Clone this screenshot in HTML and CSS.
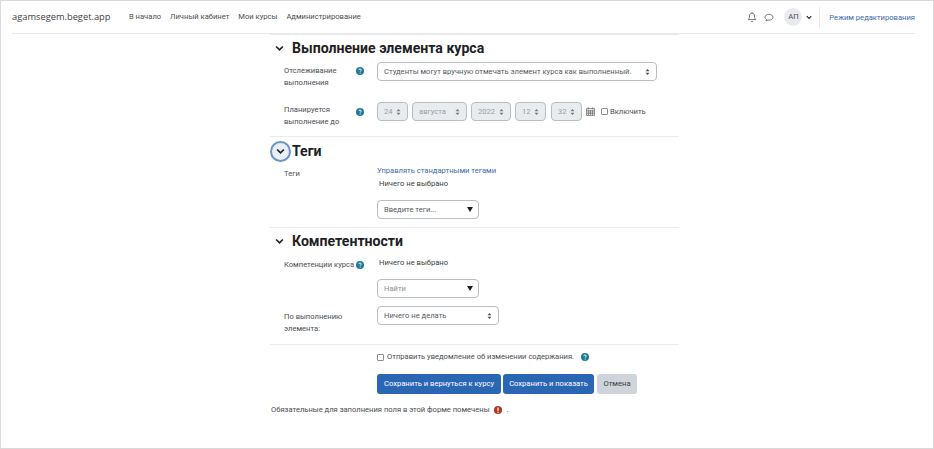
FILE: index.html
```html
<!DOCTYPE html>
<html lang="ru">
<head>
<meta charset="utf-8">
<title>agamsegem.beget.app</title>
<link rel="stylesheet" href="styles.css">
</head>
<body>
<svg class="defs" width="0" height="0" aria-hidden="true">
  <symbol id="updown" viewBox="0 0 6 8"><path d="M3 0 5.600 3H.4zM3 8 .4 5h5.200z"/></symbol>
  <symbol id="help" viewBox="0 0 8 8"><circle cx="4" cy="4" r="4" fill="#1f7a98"/><path d="M2.700 3.100C2.800 2.300 3.300 2 4 2c.8 0 1.300.4 1.300 1 0 .9-1.100.9-1.100 1.700" fill="none" stroke="#fff" stroke-width=".9"/><circle cx="4.200" cy="6" r=".55" fill="#fff"/></symbol>
  <symbol id="chev" viewBox="0 0 8 6"><path d="M1 1.200 4 4.200 7 1.200" fill="none" stroke="#1d2125" stroke-width="1.500"/></symbol>
</svg>
<div class="frame">
  <header class="nav">
    <span class="brand">agamsegem.beget.app</span>
    <nav class="menu"><a>В начало</a><a>Личный кабинет</a><a>Мои курсы</a><a>Администрирование</a></nav>
    <div class="tools">
      <svg class="tool" viewBox="0 0 10 11"><path d="M5 1.200C3.300 1.200 2.600 2.500 2.600 4c0 2.300-.9 3-1.400 3.600h7.600C8.300 7 7.400 6.300 7.400 4 7.400 2.500 6.700 1.200 5 1.200zM4 9c.2.9 1.800.9 2 0M5 .3v.9" fill="none" stroke="#555" stroke-width=".8"/></svg>
      <svg class="tool chat" viewBox="0 0 10 10"><path d="M5 1.800C2.700 1.800 1 3 1 4.700c0 1 .6 1.800 1.500 2.300L2 8.500 3.900 7.500C4.300 7.600 4.600 7.600 5 7.600c2.300 0 4-1.200 4-2.900S7.300 1.800 5 1.800z" fill="none" stroke="#555" stroke-width=".8"/></svg>
      <span class="avatar">АП</span>
      <svg class="caret"><use href="#chev"/></svg>
      <a class="edit">Режим редактирования</a>
    </div>
  </header>
  <main class="form">
    <section class="section first">
      <h3 class="heading"><svg class="chev"><use href="#chev"/></svg>Выполнение элемента курса</h3>
      <div class="row r-track">
        <div class="label"><span>Отслеживание выполнения</span><svg class="help"><use href="#help"/></svg></div>
        <div class="control"><div class="select wide">Студенты могут вручную отмечать элемент курса как выполненный.<svg class="ud"><use href="#updown"/></svg></div></div>
      </div>
      <div class="row r-date">
        <div class="label"><span>Планируется выполнение до</span><svg class="help"><use href="#help"/></svg></div>
        <div class="control dates">
          <div class="select off d1">24<svg class="ud"><use href="#updown"/></svg></div>
          <div class="select off d2">августа<svg class="ud"><use href="#updown"/></svg></div>
          <div class="select off d3">2022<svg class="ud"><use href="#updown"/></svg></div>
          <div class="select off d1">12<svg class="ud"><use href="#updown"/></svg></div>
          <div class="select off d1 d5">32<svg class="ud"><use href="#updown"/></svg></div>
          <svg class="cal" viewBox="0 0 9 9"><path d="M.5 1.500h8v7h-8zM.5 3.300h8M2.300.3v2M6.700.3v2M.5 5h8M.5 6.700h8M2.500 3.300v5M4.500 3.300v5M6.500 3.300v5" fill="none" stroke="#666" stroke-width=".7"/></svg>
          <label class="check"><i class="box"></i>Включить</label>
        </div>
      </div>
    </section>
    <section class="section tags">
      <h3 class="heading focus"><span class="ring"><svg class="chev"><use href="#chev"/></svg></span>Теги</h3>
      <div class="row r-tags">
        <div class="label"><span>Теги</span></div>
        <div class="control stack">
          <a class="link">Управлять стандартными тегами</a>
          <span class="none">Ничего не выбрано</span>
          <div class="select auto">Введите теги...<i class="tri"></i></div>
        </div>
      </div>
    </section>
    <section class="section comp">
      <h3 class="heading"><svg class="chev"><use href="#chev"/></svg>Компетентности</h3>
      <div class="row r-comp">
        <div class="label tight"><span>Компетенции курса</span><svg class="help"><use href="#help"/></svg></div>
        <div class="control stack">
          <span class="none">Ничего не выбрано</span>
          <div class="select auto find">Найти<i class="tri"></i></div>
        </div>
      </div>
      <div class="row r-done">
        <div class="label"><span>По выполнению элемента:</span></div>
        <div class="control"><div class="select action">Ничего не делать<svg class="ud"><use href="#updown"/></svg></div></div>
      </div>
    </section>
    <section class="section last">
      <div class="notify"><label class="check"><i class="box"></i>Отправить уведомление об изменении содержания.</label><svg class="help"><use href="#help"/></svg></div>
      <div class="buttons">
        <button class="btn primary b1">Сохранить и вернуться к курсу</button>
        <button class="btn primary b2">Сохранить и показать</button>
        <button class="btn cancel">Отмена</button>
      </div>
      <p class="required">Обязательные для заполнения поля в этой форме помечены<svg class="req" viewBox="0 0 8 8"><circle cx="4" cy="4" r="4" fill="#b3341f"/><path d="M4 1.500v3.200" stroke="#fff" stroke-width="1.300"/><circle cx="4" cy="6.200" r=".7" fill="#fff"/></svg>.</p>
    </section>
  </main>
</div>
</body>
</html>
```
FILE: styles.css
```css
* { box-sizing: border-box; }
html, body { margin: 0; padding: 0; background: #fff; }
body { font-family: Roboto, "Open Sans", sans-serif; font-size: 7.6px; line-height: 12px; color: #4a4d50; }
.defs { position: absolute; }
.frame { width: 934px; height: 449px; border: 1px solid #d9d9d9; overflow: hidden; }

.nav { display: flex; align-items: center; height: 33px; margin: 0 18px 0 11px; border-bottom: 1px solid #e6e8ea; }
.brand { font-family: "Open Sans", sans-serif; font-size: 9.300px; color: #3d4043; width: 117px; white-space: nowrap; }
.menu { display: flex; gap: 9px; white-space: nowrap; }
.tools { display: flex; align-items: center; margin-left: auto; }
.tool { width: 10px; height: 11px; margin-right: 7px; }
.chat { margin-right: 10px; }
.avatar { width: 18px; height: 18px; border-radius: 50%; background: #e9eaec; text-align: center; line-height: 18px; }
.caret { width: 6px; height: 5px; margin: 0 7px 0 4px; }
.edit { color: #3c6aa8; padding-left: 9px; height: 21px; line-height: 21px; border-left: 1px solid #e6e8ea; white-space: nowrap; }

.form { width: 409px; margin-left: 269px; margin-top: -1px; border-top: 2px solid #e6e8ea; }
.section { border-bottom: 1px solid #e9ebed; }
.heading { display: flex; align-items: center; margin: 0; font-size: 14.100px; line-height: 20px; font-weight: 700; color: #1d2125; white-space: nowrap; }
.chev { width: 9px; height: 7px; margin: 0 8px 0 5px; }
.first { height: 102px; padding-top: 3px; }
.tags { height: 91px; padding-top: 4px; }
.comp { height: 117px; padding-top: 3px; }
.last { border-bottom: 0; }

.focus { height: 20px; }
.ring { display: flex; align-items: center; justify-content: center; width: 21px; height: 21px; border-radius: 50%; background: #e9eef5; border: 2px solid #6d93c4; flex: none; }
.ring .chev { margin: 0; }
.focus .ring { margin-right: 1px; }

.row { display: flex; }
.label { display: flex; width: 107px; padding-left: 14px; flex: none; }
.label span { width: 60px; }
.label .help { margin: 2px 0 0 12px; }
.tight span { width: auto; white-space: nowrap; }
.tight .help { margin: 2px 0 0 2px; }
.help { width: 8px; height: 8px; flex: none; }

.r-track { height: 44px; padding-top: 4px; }
.r-track .label { padding-top: 3px; }
.r-date { height: 33px; }
.r-date .label { padding-top: 2px; }
.r-date .label .help { margin-top: 4px; }
.r-tags { padding-top: 4px; }
.r-tags .label { padding-top: 3px; }
.r-comp { height: 55px; padding-top: 6px; }
.r-comp .label { padding-top: 2px; }
.r-done .label { padding-top: 5px; }
.r-done .label span { width: 70px; }

.select { display: flex; align-items: center; justify-content: space-between; height: 19px; padding: 0 6px; background: #fff; border: 1px solid #b8bdc2; border-radius: 4px; color: #55595d; white-space: nowrap; }
.wide { width: 280px; }
.action { width: 122px; }
.auto { width: 102px; height: 19px; padding-right: 5px; }
.find { color: #8a8f94; }
.off { background: #e9ecef; color: #9a9ea2; }
.ud { width: 5px; height: 6px; fill: #4a4d50; flex: none; }
.off .ud { fill: #777; }
.d1 { width: 31px; }
.d2 { width: 55px; }
.d3 { width: 40px; }
.d5 { margin-left: 1px; }
.dates { display: flex; align-items: center; gap: 4px; height: 19px; }
.cal { width: 9px; height: 9px; margin-right: 2px; }
.check { display: flex; align-items: center; gap: 3px; white-space: nowrap; }
.dates .check { gap: 2px; }
.box { width: 7px; height: 7px; border: 1px solid #8a8f94; border-radius: 1px; background: #fff; }
.tri { width: 0; height: 0; border-left: 3.500px solid transparent; border-right: 3.500px solid transparent; border-top: 5px solid #1d2125; }

.stack { display: flex; flex-direction: column; align-items: flex-start; }
.link { color: #3c6aa8; height: 13px; white-space: nowrap; }
.none { padding-left: 2px; height: 13px; color: #3a3d40; white-space: nowrap; }
.stack .select { margin-top: 9px; }
.r-comp .none { height: 12px; }
.r-comp .select { margin-top: 10px; }

.notify { display: flex; align-items: center; gap: 7px; padding: 3px 0 0 107px; height: 21px; color: #4a4d50; }
.buttons { display: flex; gap: 2px; padding: 8px 0 0 107px; }
.btn { height: 20px; padding: 0; border: 0; border-radius: 3px; font: inherit; font-size: 7.600px; white-space: nowrap; }
.primary { background: #2b66b4; color: #fff; }
.b1 { width: 124px; }
.b2 { width: 91px; }
.cancel { width: 40px; margin-left: 1px; background: #ced4da; color: #3a3d40; }
.required { display: flex; align-items: center; margin: 10px 0 0 1px; }
.req { width: 8px; height: 8px; margin: 0 5px 0 4px; }
```
